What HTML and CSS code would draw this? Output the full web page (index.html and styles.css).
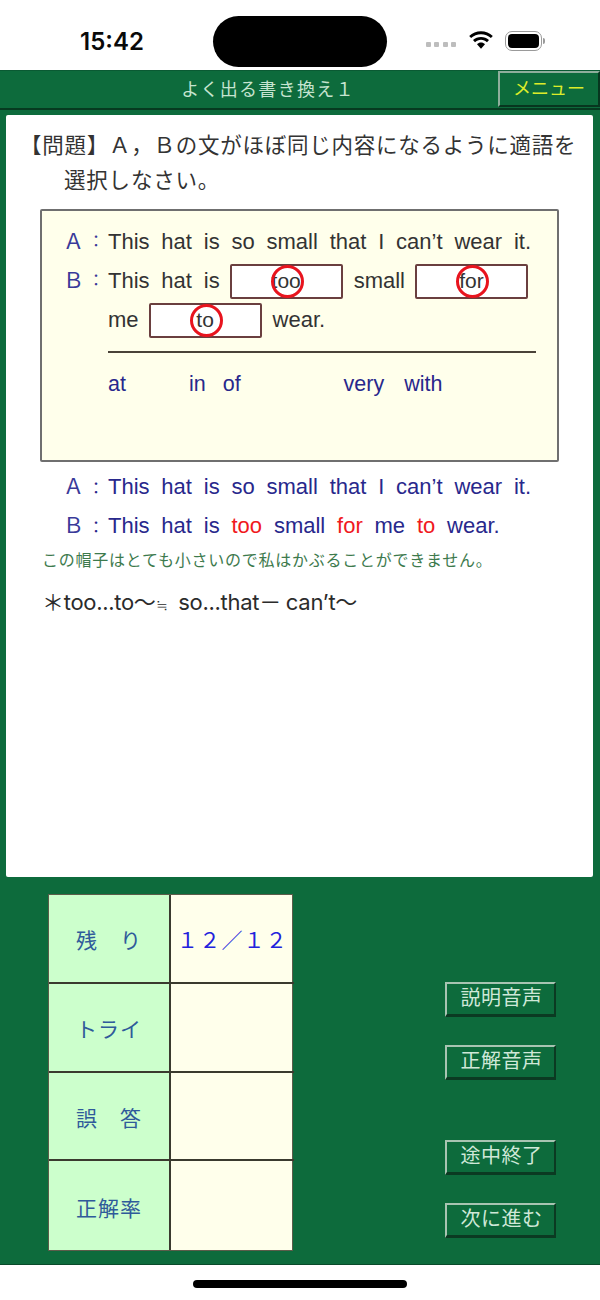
FILE: index.html
```html
<!DOCTYPE html>
<html lang="ja">
<head>
<meta charset="utf-8">
<title>よく出る書き換え1</title>
<link rel="stylesheet" href="styles.css">
</head>
<body>
<div class="phone">
  <div class="status">
    <span class="time">15:42</span>
    <div class="island"></div>
    <div class="status-icons">
      <div class="dots"><i></i><i></i><i></i><i></i></div>
      <svg class="wifi" width="26" height="20" viewBox="0 0 26 20"><path d="M13 3.2c3.8 0 7.300 1.500 9.900 3.900l1.900-2.100C21.700 2 17.500.2 13 .2S4.300 2 1.200 5l1.900 2.100C5.700 4.700 9.200 3.200 13 3.200z"/><path d="M13 8.800c2.300 0 4.400.9 6 2.400l2-2.100c-2.100-2-5-3.200-8-3.200s-5.900 1.200-8 3.200l2 2.100c1.600-1.500 3.700-2.400 6-2.400z"/><path d="M13 11.600c-1.500 0-2.900.6-4 1.600l4 4.600 4-4.600c-1.100-1-2.500-1.600-4-1.600z"/></svg>
      <div class="battery"><div class="battery-fill"></div></div>
      <div class="battery-cap"></div>
    </div>
  </div>
  <div class="app">
    <header class="topbar">
      <div class="topbar-title">よく出る書き換え１</div>
      <div class="menu-btn">メニュー</div>
    </header>
    <main class="panel">
      <div class="question"><span class="q-first">【問題】Ａ，Ｂの文がほぼ同じ内容になるように適語を</span><span class="q-second">選択しなさい。</span></div>
      <section class="quiz">
        <div class="row row-a"><span class="label">Ａ</span><span class="colon">：</span><span class="sentence">This hat is so small that I can’t wear it.</span></div>
        <div class="row row-b">
          <span class="label">Ｂ</span><span class="colon">：</span><span class="sentence">This hat is</span>
          <span class="blank blank-1"><span class="fill">too</span><span class="ring"></span></span>
          <span class="sentence mid">small</span>
          <span class="blank blank-2"><span class="fill">for</span><span class="ring"></span></span>
        </div>
        <div class="row row-c">
          <span class="sentence">me</span>
          <span class="blank blank-3"><span class="fill">to</span><span class="ring"></span></span>
          <span class="sentence mid">wear.</span>
        </div>
        <div class="rule"></div>
        <div class="choices"><span class="c-at">at</span><span class="c-in">in</span><span class="c-of">of</span><span class="c-very">very</span><span class="c-with">with</span></div>
      </section>
      <div class="answer answer-a"><span class="a-label">Ａ</span><span class="a-colon">：</span>This hat is so small that I can’t wear it.</div>
      <div class="answer answer-b"><span class="a-label">Ｂ</span><span class="a-colon">：</span>This hat is <em>too</em> small <em>for</em> me <em>to</em> wear.</div>
      <div class="translation">この帽子はとても小さいので私はかぶることができません。</div>
      <div class="note">＊too...to～<span class="approx">≒</span>so...that<span class="dash">－</span>can’t～</div>
    </main>
    <section class="lower">
      <div class="score">
        <div class="cell head">残　り</div><div class="cell val">１２／１２</div>
        <div class="cell head">トライ</div><div class="cell val"></div>
        <div class="cell head">誤　答</div><div class="cell val"></div>
        <div class="cell head">正解率</div><div class="cell val"></div>
      </div>
      <div class="actions">
        <div class="btn">説明音声</div>
        <div class="btn btn-2">正解音声</div>
        <div class="btn btn-3">途中終了</div>
        <div class="btn btn-4">次に進む</div>
      </div>
    </section>
  </div>
  <div class="home"><div class="home-bar"></div></div>
</div>
</body>
</html>
```

FILE: styles.css
```css
* { box-sizing: border-box; }
html, body { margin: 0; padding: 0; background: #fff; }
body {
  width: 600px;
  height: 1300px;
  overflow: hidden;
  font-family: "Liberation Sans", "Noto Sans CJK JP", sans-serif;
}
.phone { width: 600px; height: 1300px; display: flex; flex-direction: column; }

.status { height: 70px; position: relative; flex: none; background: #fff; }
.time {
  position: absolute; left: 80px; top: 27px;
  font: 600 24px/30px "Inter", "Liberation Sans", sans-serif;
  color: #0a0a0a;
}
.island { position: absolute; left: 213px; top: 16px; width: 174px; height: 51px; border-radius: 26px; background: #000; }
.status-icons { position: absolute; left: 426px; top: 30px; height: 22px; width: 135px; display: flex; align-items: center; }
.dots { display: flex; gap: 3.300px; margin-top: 6px; }
.dots i { width: 5px; height: 5px; background: #bdbdbd; display: block; border-radius: 1px; }
.wifi { margin-left: 12px; fill: #000; }
.battery { margin-left: 11px; width: 37px; height: 20px; border: 1.500px solid #9a9a9a; border-radius: 7px; padding: 2px; }
.battery-fill { width: 100%; height: 100%; border-radius: 4px; background: #000; }
.battery-cap { width: 2px; height: 6px; background: #9a9a9a; border-radius: 0 2px 2px 0; margin-left: 1px; }

.app { height: 1194px; flex: none; background: #0d6b3c; display: flex; flex-direction: column; border-top: 1px solid #0a5a33; }
.topbar { height: 39px; flex: none; display: flex; align-items: center; border-bottom: 2px solid #063a20; position: relative; }
.topbar-title { position: absolute; left: 0; top: 1px; width: 536px; text-align: center; color: #c6e4d0; font-size: 18px; line-height: 36px; letter-spacing: 1.300px; }
.menu-btn {
  margin-left: 498px; width: 102px; height: 36px; margin-top: -1px;
  border-top: 2px solid #8fae9c; border-left: 2px solid #8fae9c; border-right: 2px solid #07361f; border-bottom: 2px solid #07361f;
  color: #dcec2a; font-size: 18px; line-height: 33px; text-align: center;
}

.panel {
  margin: 5px 7px 0 6px; height: 762px; flex: none; background: #fff; border-radius: 2px; position: relative;
  padding: 14px 0 0 0;
}
.question { color: #333; font-size: 21.500px; line-height: 35px; }
.q-first { display: block; margin-left: 14px; white-space: nowrap; letter-spacing: 0.750px; }
.q-second { display: block; margin-left: 58px; letter-spacing: 0.800px; }

.quiz {
  margin: 10px 0 0 34px; width: 519px; height: 253px; flex: none;
  background: #ffffeb; border: 2px solid #6f6f6f; border-radius: 2px;
  padding: 13px 0 0 0; font-size: 22px; color: #333;
}
.row { display: flex; align-items: center; height: 36px; white-space: nowrap; }
.row-b { height: 40px; margin-top: 1px; }
.row-c { height: 40px; margin-top: -1px; padding-left: 66px; }
.label { width: 24px; margin-left: 21px; color: #3a3a99; font-size: 21px; line-height: 28px; }
.colon { width: 18px; margin-right: 3px; color: #3a3a99; font-size: 16px; line-height: 28px; text-align: center; }
.sentence { word-spacing: 5.700px; color: #333; line-height: 28px; }
.blank {
  width: 113px; height: 35px; background: #fff; border: 2px solid #6a3f3f; border-radius: 2px;
  display: flex; align-items: center; justify-content: center; position: relative;
}
.blank-1 { margin-left: 10px; }
.mid { margin-left: 11px; }
.blank-2 { margin-left: 10px; }
.blank-3 { margin-left: 10px; }
.fill { font-size: 21px; color: #333; }
.ring { position: absolute; left: 39px; top: -1px; width: 33px; height: 33px; border: 3px solid #e8141e; border-radius: 50%; }
.rule { height: 2px; background: #4a4338; margin: 11px 21px 0 66px; }
.choices { display: flex; margin: 17px 0 0 66px; color: #28288c; font-size: 21.500px; line-height: 28px; }
.c-in { margin-left: 63px; }
.c-of { margin-left: 17px; }
.c-very { margin-left: 103px; }
.c-with { margin-left: 20px; }

.answer { margin-left: 57px; color: #28288c; font-size: 22px; word-spacing: 5.700px; white-space: nowrap; display: block; line-height: 28px; }
.answer-a { margin-top: 11px; }
.answer-b { margin-top: 9px; }
.a-label { display: inline-block; width: 24px; color: #3a3a99; font-size: 21px; word-spacing: 0; }
.a-colon { display: inline-block; width: 18px; margin-right: 3px; font-size: 16px; text-align: center; word-spacing: 0; }
.answer em { font-style: normal; color: #f01820; }
.translation { margin: 8px 0 0 36px; font-size: 16px; line-height: 22px; color: #3d7a4d; letter-spacing: 0.750px; white-space: nowrap; }
.note { margin: 15px 0 0 36px; font: 22px/30px "Inter", "Noto Sans CJK JP", sans-serif; color: #2b2b2b; letter-spacing: -0.300px; white-space: nowrap; }
.approx { font-size: 15px; margin-right: 11px; }
.dash { margin-right: 5px; }

.lower { display: flex; padding: 17px 0 0 48px; height: 388px; flex: none; border-bottom: 1px solid #094a2a; }
.score {
  width: 245px; height: 357px; flex: none; display: grid;
  grid-template-columns: 122px 123px; grid-template-rows: repeat(4, 1fr);
  border: 1px solid #5c5c4a; background: #ffffeb;
}
.cell { display: flex; align-items: center; justify-content: center; padding-top: 2px; border-bottom: 2px solid #3a3a2e; font-size: 21px; }
.cell:nth-last-child(-n+2) { border-bottom: 0; }
.head { background: #ccffcc; color: #2f5a9a; border-right: 2px solid #3a3a2e; letter-spacing: 1px; }
.val { color: #2222dd; font-size: 21px; letter-spacing: 1.200px; }

.actions { margin: 88px 0 0 152px; display: flex; flex-direction: column; width: 111px; flex: none; }
.btn {
  height: 35px; background: #0d6b3c; padding-left: 2px;
  border-top: 2px solid #a8c4b2; border-left: 2px solid #a8c4b2; border-right: 2px solid #0b3a22; border-bottom: 3px solid #0b3a22;
  color: #cfe8d8; font-size: 20px; line-height: 28px; text-align: center; letter-spacing: 0.500px; white-space: nowrap;
}
.btn-2 { margin-top: 28px; }
.btn-3 { margin-top: 60px; }
.btn-4 { margin-top: 28px; }

.home { flex: none; height: 36px; display: flex; justify-content: center; padding-top: 16px; }
.home-bar { width: 214px; height: 8px; background: #000; border-radius: 4px; }
```
